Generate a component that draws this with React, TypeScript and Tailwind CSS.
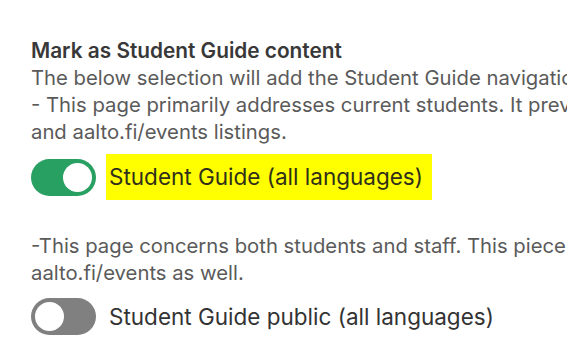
export default function App() {
  return (
    <div className="h-[354px] w-[567px] overflow-hidden bg-white pl-[31px] pt-[37px] font-['Inter',sans-serif]">
      <div className="whitespace-nowrap text-[20.8px] font-semibold leading-[27px] text-[#383838]">
        Mark as Student Guide content
      </div>
      <div className="whitespace-nowrap text-[20.3px] leading-[27px] text-[#5a5a5a]">
        <div>The below selection will add the Student Guide navigation to the page.</div>
        <div>- This page primarily addresses current students. It prevents the content from appearing in aalto.fi/news</div>
        <div>and aalto.fi/events listings.</div>
      </div>

      <label className="mt-[9px] flex items-center gap-[10px]">
        <span className="flex h-[37px] w-[65px] shrink-0 items-center justify-end rounded-full bg-[#28a062] pr-[4px]">
          <span className="h-[29px] w-[29px] rounded-full bg-white" />
        </span>
        <span className="whitespace-nowrap bg-[#ffff00] py-[10px] pl-[3px] pr-[9px] text-[22.5px] leading-[26px] text-[#2f2f1a]">
          Student Guide (all languages)
        </span>
      </label>

      <div className="mt-[32px] whitespace-nowrap text-[20.3px] leading-[27px] text-[#5a5a5a]">
        <div>-This page concerns both students and staff. This piece of content will be shown in aalto.fi/news and</div>
        <div>aalto.fi/events as well.</div>
      </div>

      <label className="mt-[12px] flex items-center gap-[10px]">
        <span className="flex h-[37px] w-[65px] shrink-0 items-center justify-start rounded-full bg-[#808080] pl-[4px]">
          <span className="h-[29px] w-[29px] rounded-full bg-white" />
        </span>
        <span className="whitespace-nowrap pl-[3px] text-[22.5px] leading-[26px] text-[#333]">
          Student Guide public (all languages)
        </span>
      </label>
    </div>
  );
}
